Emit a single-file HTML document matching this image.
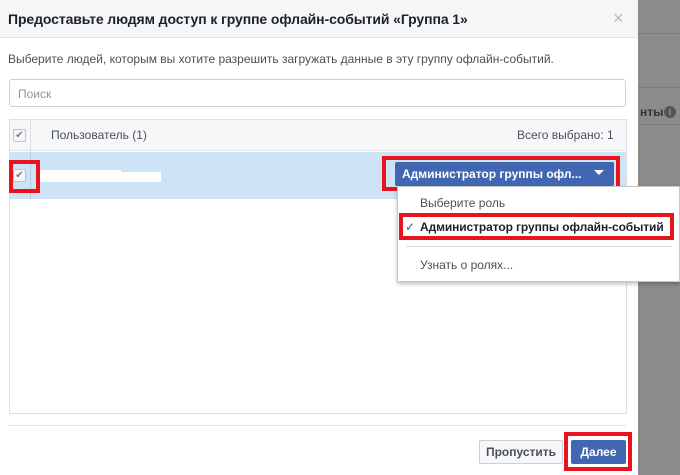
<!DOCTYPE html>
<html><head><meta charset="utf-8"><style>
*{box-sizing:border-box;margin:0;padding:0}
body{width:680px;height:475px;overflow:hidden;background:#8b8b8b;font-family:"Liberation Sans",sans-serif;position:relative;font-size:12px;color:#1d2129}
.a{position:absolute}
.cb{position:absolute;width:13px;height:13px;border:1px solid #bec2c9;background:#f5f6f7;border-radius:2px;color:#7a7e85;font-size:10px;line-height:11px;text-align:center}
.red{position:absolute;border:4px solid #e8141d}
</style></head><body>
<div class="a" style="left:638px;top:33px;width:42px;height:1px;background:#7a7a7a"></div>
<div class="a" style="left:638px;top:87px;width:42px;height:1px;background:#7a7a7a"></div>
<div class="a" style="left:638px;top:124px;width:42px;height:1px;background:#7a7a7a"></div>
<div class="a" style="left:640px;top:105px;font-size:12px;font-weight:bold;color:#333">нты</div>
<div class="a" style="left:664px;top:106px;width:12px;height:12px;border-radius:50%;background:#555;color:#999;font-size:9px;text-align:center;line-height:12px;font-weight:bold">i</div>
<div class="a" style="left:0;top:0;width:638px;height:475px;background:#fff"></div>
<div class="a" style="left:0;top:0;width:638px;height:38px;background:#f5f6f7;border-bottom:1px solid #e5e5e5"></div>
<div class="a" style="left:8px;top:11px;font-size:14px;font-weight:bold;letter-spacing:-0.1px">Предоставьте людям доступ к группе офлайн-событий «Группа 1»</div>
<div class="a" style="left:613px;top:8px;font-size:18px;color:#bbb">×</div>
<div class="a" style="left:8px;top:52px;font-size:12px;color:#4b4f56">Выберите людей, которым вы хотите разрешить загружать данные в эту группу офлайн-событий.</div>
<div class="a" style="left:9px;top:79px;width:617px;height:28px;border:1px solid #ccd0d5;border-radius:3px;padding:7px 8px;color:#90949c">Поиск</div>
<div class="a" style="left:9px;top:119px;width:618px;height:295px;border:1px solid #dddfe2"></div>
<div class="a" style="left:10px;top:120px;width:616px;height:31px;background:#f6f7f9;border-bottom:1px solid #e5e5e5"></div>
<div class="a" style="left:30px;top:120px;width:1px;height:80px;background:#dddfe2"></div>
<div class="cb" style="left:13px;top:129px">✔</div>
<div class="a" style="left:51px;top:128px;color:#4b4f56">Пользователь (1)</div>
<div class="a" style="left:517px;top:128px;color:#4b4f56">Всего выбрано: 1</div>
<div class="a" style="left:10px;top:152px;width:616px;height:47px;background:#cfe3f7"></div>
<div class="a" style="left:30px;top:152px;width:1px;height:47px;background:#b9cde2"></div>
<div class="cb" style="left:13px;top:169px">✔</div>
<div class="a" style="left:36px;top:170px;width:85px;height:12px;background:#fff"></div>
<div class="a" style="left:121px;top:172px;width:40px;height:10px;background:#fff"></div>
<div class="a" style="left:395px;top:162px;width:219px;height:24px;background:#4267b2;color:#fff;font-weight:bold;font-size:12px;padding:5px 7px;border-radius:2px">Администратор группы офл...<span style="position:absolute;left:199px;top:8px;width:0;height:0;border-left:5px solid transparent;border-right:5px solid transparent;border-top:5px solid #fff"></span></div>
<div class="red" style="left:382px;top:156px;width:238px;height:35px"></div>
<div class="red" style="left:9px;top:160px;width:31px;height:33px"></div>
<div class="a" style="left:397px;top:186px;width:283px;height:96px;background:#fff;border:1px solid #c8c8c8;box-shadow:0 2px 4px rgba(0,0,0,.25)"></div>
<div class="a" style="left:420px;top:196px;color:#4b4f56">Выберите роль</div>
<div class="a" style="left:405px;top:220px;color:#555">✓</div>
<div class="a" style="left:420px;top:220px;font-weight:bold;font-size:12px;letter-spacing:-0.1px">Администратор группы офлайн-событий</div>
<div class="red" style="left:399px;top:213px;width:275px;height:27px"></div>
<div class="a" style="left:406px;top:246px;width:266px;height:1px;background:#ddd"></div>
<div class="a" style="left:420px;top:258px;color:#4b4f56">Узнать о ролях...</div>
<div class="a" style="left:9px;top:425px;width:617px;height:1px;background:#e5e5e5"></div>
<div class="a" style="left:479px;top:440px;width:84px;height:24px;border:1px solid #ccd0d5;background:#f6f7f9;border-radius:2px;color:#4b4f56;font-weight:bold;text-align:center;line-height:22px">Пропустить</div>
<div class="a" style="left:571px;top:440px;width:55px;height:24px;background:#4267b2;border-radius:2px;color:#fff;font-weight:bold;text-align:center;line-height:24px">Далее</div>
<div class="red" style="left:564px;top:432px;width:68px;height:39px"></div>
</body></html>
